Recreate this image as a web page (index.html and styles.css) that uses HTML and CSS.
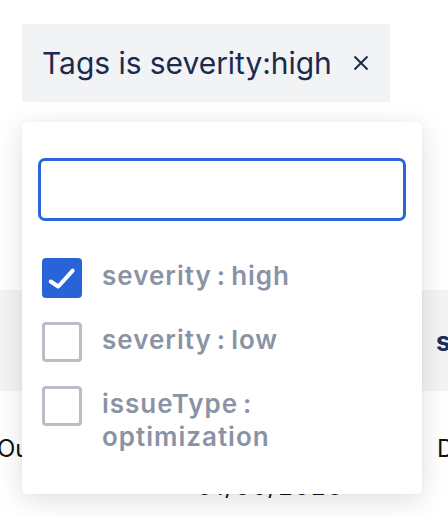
FILE: index.html
```html
<!DOCTYPE html>
<html lang="en">
<head>
<meta charset="utf-8">
<title>Tag filter</title>
<link rel="stylesheet" href="styles.css">
</head>
<body>
<div class="page">
  <div class="chip">
    <span class="chip-label">Tags is severity:high</span>
    <svg class="chip-x" width="16" height="16" viewBox="0 0 16 16" aria-hidden="true">
      <path d="M1.5 1.5 L14.5 14.5 M14.5 1.5 L1.5 14.5" stroke="#1b2a4e" stroke-width="2" fill="none"/>
    </svg>
  </div>

  <div class="table">
    <div class="row head">
      <div class="cell c1"></div>
      <div class="cell c2"></div>
      <div class="cell c3 head-text">s</div>
    </div>
    <div class="row body">
      <div class="cell c1 first">Ou</div>
      <div class="cell c2 date">01/06/2020</div>
      <div class="cell c3">D</div>
    </div>
  </div>

  <div class="dropdown">
    <div class="search"></div>
    <ul class="options">
      <li class="option">
        <span class="box checked">
          <svg width="40" height="40" viewBox="0 0 40 40" aria-hidden="true">
            <path d="M8.7 23.5 L16.3 28.5 L30.7 12.7" stroke="#fff" stroke-width="4" fill="none" stroke-linecap="round" stroke-linejoin="round"/>
          </svg>
        </span>
        <span class="label">severity : high</span>
      </li>
      <li class="option">
        <span class="box"></span>
        <span class="label">severity : low</span>
      </li>
      <li class="option">
        <span class="box"></span>
        <span class="label">issueType :<br>optimization</span>
      </li>
    </ul>
  </div>
</div>
</body>
</html>
```

FILE: styles.css
```css
html, body {
  margin: 0;
  padding: 0;
  background: #ffffff;
}

.page {
  position: relative;
  width: 448px;
  height: 516px;
  overflow: hidden;
  font-family: "Inter", "Roboto", sans-serif;
}

.chip {
  display: flex;
  align-items: center;
  box-sizing: border-box;
  width: 368px;
  height: 78px;
  margin: 24px 0 0 22px;
  padding: 0 20px;
  background: #f2f3f5;
  color: #1b2a4e;
}

.chip-label {
  font-size: 30px;
  font-weight: 400;
  line-height: 1;
  letter-spacing: -0.05px;
}

.chip-x {
  margin-left: auto;
  margin-right: 1px;
}

.table {
  margin-top: 188px;
}

.row {
  display: grid;
  grid-template-columns: 197px 239px 1fr;
}

.row.head {
  height: 101px;
  background: #f4f4f4;
  align-items: center;
}

.head-text {
  font-weight: 700;
  font-size: 26px;
  color: #1f2d52;
  padding-top: 2px;
}

.row.body {
  height: 130px;
  font-size: 24px;
  color: #111;
}

.cell {
  white-space: nowrap;
}

.first {
  margin-left: -3px;
  padding-top: 43px;
}

.body .c3 {
  padding-top: 43px;
  padding-left: 1px;
}

.date {
  padding-top: 81px;
  letter-spacing: 1.5px;
}

.dropdown {
  position: absolute;
  left: 22px;
  top: 122px;
  width: 400px;
  height: 372px;
  box-sizing: border-box;
  padding: 36px 16px 0;
  background: #ffffff;
  border-radius: 5px;
  box-shadow: 0 6px 28px rgba(0, 0, 0, 0.13), 0 0 3px rgba(0, 0, 0, 0.04);
}

.search {
  height: 63px;
  box-sizing: border-box;
  border: 3px solid #2a66d9;
  border-radius: 7px;
}

.options {
  list-style: none;
  margin: 37px 0 0;
  padding: 0 0 0 4px;
  display: flex;
  flex-direction: column;
  gap: 24px;
}

.option {
  display: flex;
  align-items: flex-start;
  gap: 20px;
}

.box {
  flex: none;
  width: 40px;
  height: 40px;
  box-sizing: border-box;
  border: 3px solid #b9bdc7;
  border-radius: 4px;
  background: #fff;
}

.box.checked {
  border: none;
  background: #2864d8;
}

.box svg {
  display: block;
}

.label {
  font-family: "Inter", "Roboto", sans-serif;
  font-size: 26px;
  font-weight: 600;
  line-height: 33px;
  letter-spacing: 1px;
  word-spacing: -2.5px;
  color: #8a93a5;
  padding-top: 1px;
}
```
